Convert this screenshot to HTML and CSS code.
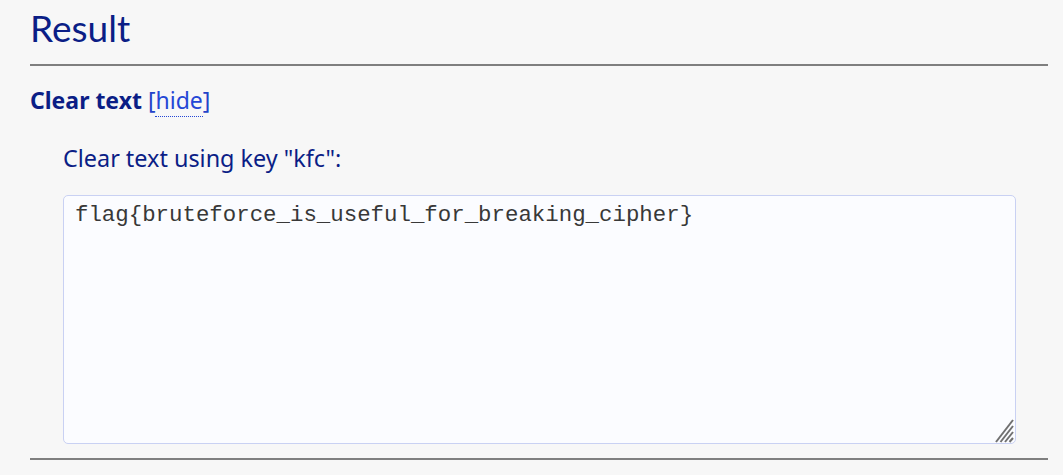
FILE: index.html
```html
<!DOCTYPE html>
<html>
<head>
<meta charset="utf-8">
<link rel="stylesheet" href="styles.css">
</head>
<body>
<div class="page">
  <h2 class="title">Result</h2>
  <div class="section">
    <div class="section-head"><span class="section-name">Clear text</span> <span class="toggle">[<a class="toggle-link">hide</a>]</span></div>
    <div class="section-body">
      <div class="label">Clear text using key "kfc":</div>
      <div class="output-wrap">
        <textarea class="output" spellcheck="false">flag{bruteforce_is_useful_for_breaking_cipher}</textarea>
        <svg class="grip" width="22" height="24" viewBox="0 0 22 24" aria-hidden="true">
          <g stroke="#707070" stroke-width="2" stroke-linecap="butt">
            <line x1="21" y1="1" x2="4" y2="23"/>
            <line x1="21" y1="7" x2="8.5" y2="23"/>
            <line x1="21" y1="13" x2="13" y2="23"/>
            <line x1="21" y1="19" x2="17.5" y2="23"/>
          </g>
        </svg>
      </div>
    </div>
  </div>
  <div class="rule"></div>
</div>
</body>
</html>
```
FILE: styles.css
```css
html, body {
  margin: 0;
  padding: 0;
}
body {
  background: #f7f7f7;
  font-family: "Noto Sans", sans-serif;
  color: #0b1e86;
}
.page {
  padding: 0 15px 0 30px;
}
.title {
  margin: 0;
  padding-top: 6px;
  font-family: Lato, "Noto Sans", sans-serif;
  font-size: 37px;
  font-weight: 400;
  line-height: 44px;
  height: 58px;
  border-bottom: 2px solid #7f7f7f;
}
.section-head {
  margin-top: 19px;
  font-size: 23px;
  line-height: 30px;
}
.section-name {
  font-weight: 700;
}
.toggle {
  color: #2343c8;
}
.toggle-link {
  color: #2447d6;
  border-bottom: 1px dotted #2447d6;
}
.section-body {
  padding-left: 33px;
  padding-right: 32px;
}
.label {
  margin-top: 28px;
  font-size: 23.4px;
  line-height: 30px;
}
.output-wrap {
  position: relative;
  margin-top: 22px;
}
.output {
  display: block;
  box-sizing: border-box;
  width: 100%;
  height: 249px;
  margin: 0;
  padding: 5px 11px;
  border: 1px solid #c9d1f3;
  border-radius: 5px;
  background: #fbfcff;
  font-family: "Liberation Mono", monospace;
  font-size: 22.4px;
  line-height: 28px;
  color: #383838;
  resize: none;
  outline: none;
}
.grip {
  position: absolute;
  right: 2px;
  bottom: 1px;
  pointer-events: none;
}
.rule {
  margin-top: 14px;
  height: 2px;
  background: #7f7f7f;
}
```
